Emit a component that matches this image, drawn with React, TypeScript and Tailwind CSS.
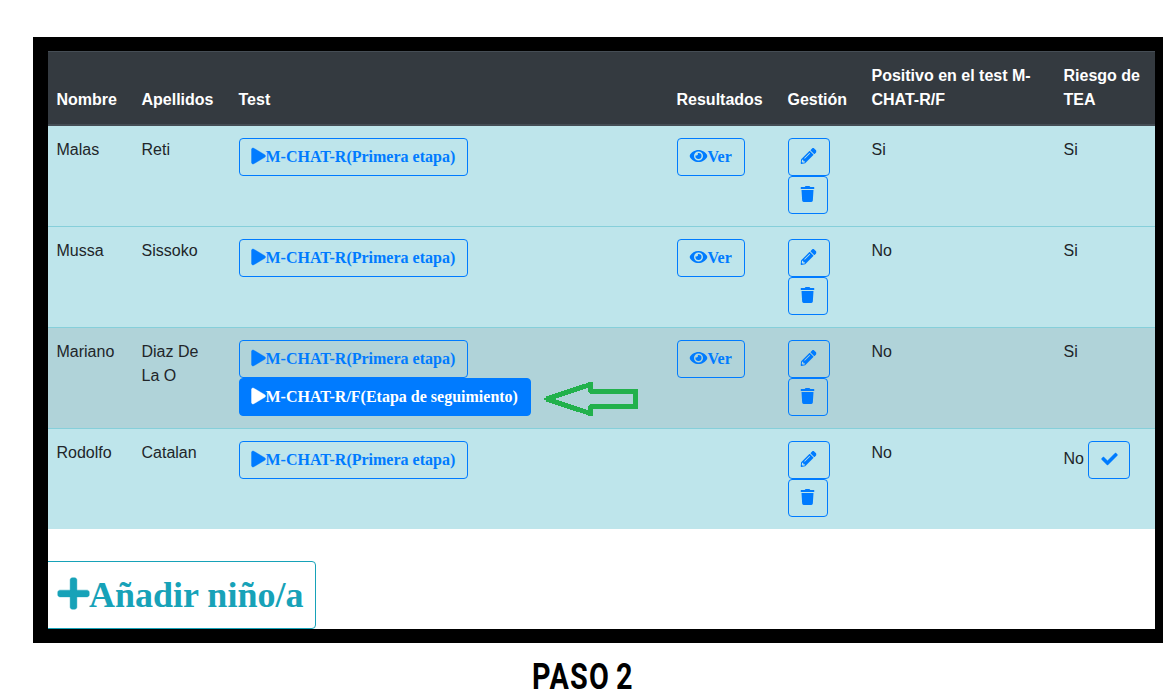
import type { ReactNode } from "react";
import { FaCheck, FaEye, FaPencilAlt, FaPlay, FaPlus, FaTrash } from "react-icons/fa";

const COLS =
  "grid grid-cols-[85px_97px_438px_111px_84px_192px_91px] pl-[8.5px]";

const SERIF = "font-['Liberation_Serif',serif] font-bold";

type Child = {
  nombre: string;
  apellidos: string;
  seguimiento?: boolean;
  resultados: boolean;
  positivo: string;
  riesgo: string;
  confirmar?: boolean;
};

const children: Child[] = [
  { nombre: "Malas", apellidos: "Reti", resultados: true, positivo: "Si", riesgo: "Si" },
  { nombre: "Mussa", apellidos: "Sissoko", resultados: true, positivo: "No", riesgo: "Si" },
  { nombre: "Mariano", apellidos: "Diaz De La O", seguimiento: true, resultados: true, positivo: "No", riesgo: "Si" },
  { nombre: "Rodolfo", apellidos: "Catalan", resultados: false, positivo: "No", riesgo: "No", confirmar: true },
];

function Button({ solid = false, children }: { solid?: boolean; children: ReactNode }) {
  const tone = solid ? "bg-[#007bff] text-white" : "text-[#007bff]";
  return (
    <button
      className={`flex h-[38px] w-fit items-center whitespace-nowrap rounded border border-[#007bff] px-3 pb-px text-base leading-none ${SERIF} ${tone}`}
    >
      {children}
    </button>
  );
}

function Arrow() {
  return (
    <svg width="96" height="36" viewBox="0 0 96 36" className="mt-[3px] ml-3 shrink-0" shapeRendering="crispEdges" aria-hidden="true">
      <path
        d="M3.5 18 L47.5 3.5 V10.5 H92.5 V25.5 H47.5 V32.5 Z"
        fill="none"
        stroke="#22b14c"
        strokeWidth="5"
        strokeLinejoin="bevel"
      />
      <path d="M1 17 H4 V19 H1 Z M90 8 H95 V13 H90 Z M90 23 H95 V28 H90 Z M45 1 H50 V5 H45 Z M45 31 H50 V35 H45 Z" fill="#22b14c" />
    </svg>
  );
}

function Row({ child, first }: { child: Child; first: boolean }) {
  const bg = child.seguimiento ? "bg-[#b0d3d9]" : "bg-[#bee5eb]";
  const border = first ? "h-[100px]" : "h-[101px] border-t border-[#86cfda]";
  return (
    <div className={`${COLS} ${bg} ${border} pt-3`}>
      <div>{child.nombre}</div>
      <div className="w-[73px]">{child.apellidos}</div>
      <div>
        <Button>
          <FaPlay className="h-4 w-3.5 -translate-x-[0.5px] -translate-y-px overflow-visible stroke-current stroke-[12]" />
          M-CHAT-R(Primera etapa)
        </Button>
        {child.seguimiento && (
          <div className="flex h-[38px]">
            <Button solid>
              <FaPlay className="h-4 w-3.5 -translate-x-[0.5px] -translate-y-px overflow-visible stroke-current stroke-[12]" />
              M-CHAT-R/F(Etapa de seguimiento)
            </Button>
            <Arrow />
          </div>
        )}
      </div>
      <div>
        {child.resultados && (
          <Button>
            <FaEye className="h-4 w-[18px] -translate-x-[0.5px] -translate-y-px" />
            Ver
          </Button>
        )}
      </div>
      <div>
        <Button>
          <FaPencilAlt className="size-4 -translate-x-[0.5px] -translate-y-px" />
        </Button>
        <Button>
          <FaTrash className="h-4 w-3.5 -translate-x-[0.5px] -translate-y-px" />
        </Button>
      </div>
      <div>{child.positivo}</div>
      <div className="flex gap-1">
        <span className={child.confirmar ? "pt-1.5" : ""}>{child.riesgo}</span>
        {child.confirmar && (
          <Button>
            <FaCheck className="size-4 translate-x-[0.5px] -translate-y-px overflow-visible stroke-current stroke-[14]" />
          </Button>
        )}
      </div>
    </div>
  );
}

export default function App() {
  return (
    <div className="h-[698px] w-[1172px] overflow-hidden bg-white pt-[37px] font-['Liberation_Sans',Arial,sans-serif] text-base leading-6 text-[#212529]">
      <div className="ml-[33px] h-[606px] w-[1130px] overflow-hidden border-y-14 border-r-8 border-l-15 border-black">
        <div className={`${COLS} h-[75px] items-end border-t border-b-2 border-[#454d55] bg-[#343a40] pb-3 font-bold text-white`}>
          <div>Nombre</div>
          <div>Apellidos</div>
          <div>Test</div>
          <div>Resultados</div>
          <div>Gestión</div>
          <div>
            Positivo en el test M-
            <br />
            CHAT-R/F
          </div>
          <div>
            Riesgo de
            <br />
            TEA
          </div>
        </div>
        {children.map((child, i) => (
          <Row key={child.nombre} child={child} first={i === 0} />
        ))}
        <button
          className={`mt-8 -ml-1 flex h-[68px] w-[272px] items-center rounded border border-[#17a2b8] pl-[12.5px] text-4xl leading-none whitespace-nowrap text-[#17a2b8] ${SERIF}`}
        >
          <FaPlus className="h-9 w-[31.5px] shrink-0 -translate-x-[0.25px] -translate-y-[1.5px] overflow-visible stroke-current stroke-[6]" />
          Añadir niño/a
        </button>
      </div>
      <div className="ml-[531.5px] w-fit origin-left scale-x-[0.8] pt-[13px] font-[Roboto,sans-serif] text-4xl leading-[42px] font-bold tracking-[1.5px] whitespace-nowrap text-black [word-spacing:-3px]">
        PASO 2
      </div>
    </div>
  );
}
